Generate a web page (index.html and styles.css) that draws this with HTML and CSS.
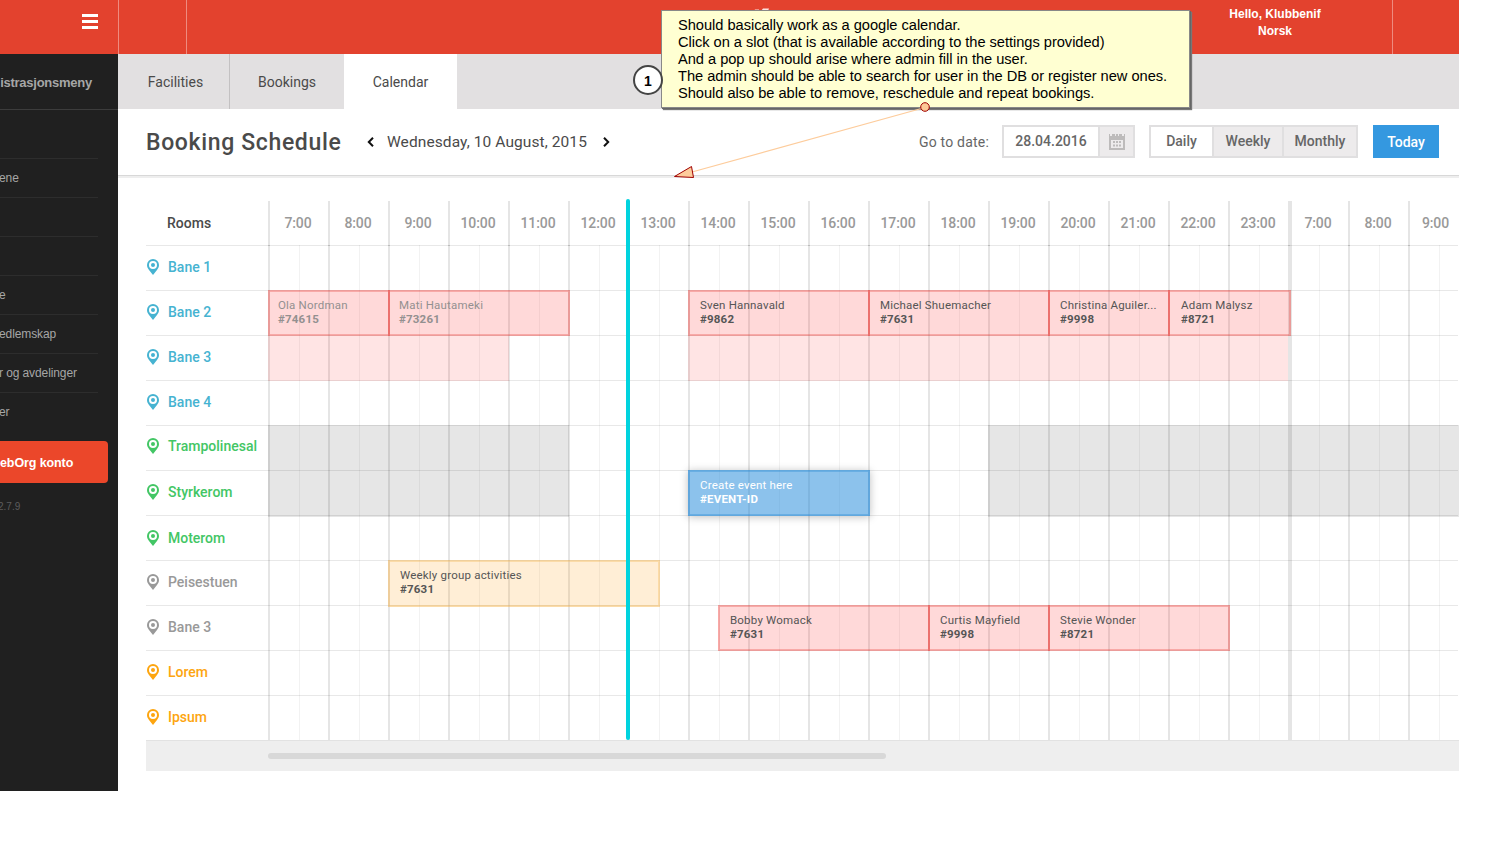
FILE: index.html
```html
<!DOCTYPE html>
<html lang="en">
<head>
  <meta charset="UTF-8" />
  <meta name="viewport" content="width=device-width, initial-scale=1.0"/>
  <title>Booking Schedule</title>
  <link rel="stylesheet" href="styles.css">
</head>
<body>
  <svg width="0" height="0" class="defs">
    <symbol id="pin" viewBox="0 0 12 16">
      <path fill-rule="evenodd" d="M6 0a6 6 0 0 0-6 6c0 2 .9 3.500 2 5l4 5 4-5c1.100-1.500 2-3 2-5a6 6 0 0 0-6-6zm0 2a4 4 0 1 1 0 8 4 4 0 0 1 0-8z"/>
      <circle cx="6" cy="6" r="2"/>
    </symbol>
  </svg>

  <div class="page">
    <header>
      <div class="menu-btn"><span></span><span></span><span></span></div>
      <div class="header-cell"></div>
      <div class="header-logo">
        <svg width="16" height="6" viewBox="0 0 16 6"><path d="M1 1.500h4v1.500H0zM9 0.500h6l-1 2.500H7z" fill="#fff" opacity=".85"/></svg>
      </div>
      <div class="user">Hello, Klubbenif<br>Norsk</div>
      <div class="header-end"></div>
    </header>

    <div class="main">
      <aside>
        <h3>istrasjonsmeny</h3>
        <ul>
          <li></li>
          <li>ene</li>
          <li></li>
          <li></li>
          <li>e</li>
          <li>edlemskap</li>
          <li>r og avdelinger</li>
          <li>er</li>
        </ul>
        <button class="konto">ebOrg konto</button>
        <p class="version">2.7.9</p>
      </aside>

      <div class="content">
        <nav>
          <a class="tab tab-first">Facilities</a>
          <a class="tab">Bookings</a>
          <a class="tab active">Calendar</a>
        </nav>

        <div class="toolbar">
          <h1>Booking Schedule</h1>
          <svg class="arrow" width="7" height="10" viewBox="0 0 7 10"><path d="M6 0.800L1.800 5 6 9.200"/></svg>
          <span class="date">Wednesday, 10 August, 2015</span>
          <svg class="arrow" width="7" height="10" viewBox="0 0 7 10"><path d="M1 0.800L5.200 5 1 9.200"/></svg>
          <span class="goto">Go to date:</span>
          <div class="date-box">
            <span>28.04.2016</span>
            <i>
              <svg width="16" height="16" viewBox="0 0 16 16" fill="#bdbbbb">
                <path d="M0 0h1v2h2V0h3v2h1V0h2v2h1V0h3v2h2V0h1v4H0z"/>
                <path fill-rule="evenodd" d="M0 4h16v12H0zM2 6v8h12V6z"/>
                <path d="M4 7h2v2H4zM7 7h2v2H7zM10 7h2v2h-2zM4 10.500h2v2H4zM7 10.500h2v2H7zM10 10.500h2v2h-2z"/>
              </svg>
            </i>
          </div>
          <div class="views">
            <span class="on">Daily</span>
            <span>Weekly</span>
            <span>Monthly</span>
          </div>
          <button class="today">Today</button>
        </div>

        <div class="schedule">
          <div class="hours">
            <b>Rooms</b>
            <span>7:00</span><span>8:00</span><span>9:00</span><span>10:00</span><span>11:00</span><span>12:00</span>
            <span>13:00</span><span>14:00</span><span>15:00</span><span>16:00</span><span>17:00</span><span>18:00</span>
            <span>19:00</span><span>20:00</span><span>21:00</span><span>22:00</span><span>23:00</span>
            <span class="next-day">7:00</span><span>8:00</span><span class="last">9:00</span>
          </div>

          <div class="rows">
            <div class="row blue">
              <div class="room"><svg><use href="#pin"/></svg>Bane 1</div>
            </div>
            <div class="row blue">
              <div class="room up"><svg><use href="#pin"/></svg>Bane 2</div>
              <div class="event past first" style="grid-column: 2 / span 4">Ola Nordman<b>#74615</b></div>
              <div class="event past" style="grid-column: 6 / span 6">Mati Hautameki<b>#73261</b></div>
              <div class="event" style="grid-column: 16 / span 6">Sven Hannavald<b>#9862</b></div>
              <div class="event" style="grid-column: 22 / span 6">Michael Shuemacher<b>#7631</b></div>
              <div class="event" style="grid-column: 28 / span 4">Christina Aguiler...<b>#9998</b></div>
              <div class="event day-end" style="grid-column: 32 / span 4">Adam Malysz<b>#8721</b></div>
            </div>
            <div class="row blue">
              <div class="room up"><svg><use href="#pin"/></svg>Bane 3</div>
              <div class="busy" style="grid-column: 2 / span 8"></div>
              <div class="busy to-end" style="grid-column: 16 / span 20"></div>
            </div>
            <div class="row blue">
              <div class="room"><svg><use href="#pin"/></svg>Bane 4</div>
            </div>
            <div class="row green">
              <div class="room up"><svg><use href="#pin"/></svg>Trampolinesal</div>
              <div class="closed" style="grid-column: 2 / span 10"></div>
              <div class="closed late" style="grid-column: 26 / span 16"></div>
            </div>
            <div class="row green">
              <div class="room up"><svg><use href="#pin"/></svg>Styrkerom</div>
              <div class="closed bottom" style="grid-column: 2 / span 10"></div>
              <div class="event new" style="grid-column: 16 / span 6">Create event here<b>#EVENT-ID</b></div>
              <div class="closed bottom late" style="grid-column: 26 / span 16"></div>
            </div>
            <div class="row green">
              <div class="room down"><svg><use href="#pin"/></svg>Moterom</div>
            </div>
            <div class="row gray">
              <div class="room up"><svg><use href="#pin"/></svg>Peisestuen</div>
              <div class="event weekly" style="grid-column: 6 / span 9">Weekly group activities<b>#7631</b></div>
            </div>
            <div class="row gray">
              <div class="room up"><svg><use href="#pin"/></svg>Bane 3</div>
              <div class="event" style="grid-column: 17 / span 7">Bobby Womack<b>#7631</b></div>
              <div class="event" style="grid-column: 24 / span 4">Curtis Mayfield<b>#9998</b></div>
              <div class="event" style="grid-column: 28 / span 6">Stevie Wonder<b>#8721</b></div>
            </div>
            <div class="row orange">
              <div class="room"><svg><use href="#pin"/></svg>Lorem</div>
            </div>
            <div class="row orange">
              <div class="room"><svg><use href="#pin"/></svg>Ipsum</div>
            </div>
          </div>
          <div class="now"></div>
          <div class="scroll"><div class="thumb"></div></div>
        </div>
      </div>
    </div>
  </div>

  <!-- Review note -->
  <div class="note">
    <p>Should basically work as a google calendar.</p>
    <p>Click on a slot (that is available according to the settings provided)</p>
    <p>And a pop up should arise where admin fill in the user.</p>
    <p>The admin should be able to search for user in the DB or register new ones.</p>
    <p>Should also be able to remove, reschedule and repeat bookings.</p>
  </div>
  <div class="note-number">1</div>
  <svg class="note-arrow" width="260" height="80" viewBox="0 0 260 80">
    <path d="M253 7.500L20 72" stroke="#fdcc9c" stroke-width="1.200" fill="none"/>
    <path d="M2.500 76.500L19.500 66.500 21.500 77.500z" fill="#fdcc9c" stroke="#a00000"/>
    <circle cx="253" cy="7" r="4.300" fill="#fdc896" stroke="#a00000"/>
  </svg>
</body>
</html>
```
FILE: styles.css
```css
* {
  box-sizing: border-box;
}
body {
  margin: 0;
  background: #fff;
  color: #4a4a4a;
  font-family: Roboto, sans-serif;
  font-size: 14px;
  overflow: hidden;
}
.defs {
  position: absolute;
}
.page {
  width: 1459px;
}
header {
  display: flex;
  height: 54px;
  background: #e3422e;
  color: #fff;
}
.menu-btn {
  width: 118px;
  padding: 14px 20px 0 82px;
  display: flex;
  flex-direction: column;
  gap: 3px;
}
.menu-btn span {
  height: 3px;
  background: #fff;
}
.header-cell {
  width: 69px;
  border-left: 1px solid #ee8b7f;
  border-right: 1px solid #ee8b7f;
}
.header-logo {
  flex: 1;
  padding: 8px 0 0 567px;
}
.header-logo svg {
  display: block;
}
.user {
  width: 234px;
  padding-top: 6px;
  text-align: center;
  font: bold 12px/17px "Liberation Sans", sans-serif;
}
.header-end {
  width: 67px;
  border-left: 1px solid #ee8b7f;
}
.main {
  display: flex;
}

/* Sidebar */
aside {
  width: 118px;
  height: 737px;
  background: #202020;
  color: #a6a6a6;
  font: 12px "Liberation Sans", sans-serif;
  overflow: hidden;
  white-space: nowrap;
}
aside h3 {
  height: 56px;
  margin: 0 0 10px;
  padding-right: 26px;
  border-bottom: 1px solid #3c3c3c;
  font-size: 13px;
  line-height: 57px;
  text-align: right;
  letter-spacing: -0.25px;
}
aside ul {
  list-style: none;
  margin: 0 20px 0 0;
  padding: 0;
}
aside li {
  height: 39px;
  line-height: 38px;
  border-bottom: 1px solid #2d2d2d;
  text-indent: -1px;
  letter-spacing: -0.1px;
}
aside li:last-child {
  border: none;
}
.konto {
  display: block;
  width: 112px;
  height: 42px;
  margin: 9px 0 0 -4px;
  padding: 1px 0 0 4px;
  border: none;
  border-radius: 4px;
  background: #eb472a;
  color: #fff;
  font: bold 12.500px "Liberation Sans", sans-serif;
  letter-spacing: -0.1px;
  text-align: left;
}
.version {
  margin: 18px 0 0 -2px;
  color: #5c5c5c;
  font-size: 10px;
}

/* Tabs and toolbar */
.content {
  flex: 1;
}
nav {
  display: flex;
  height: 55px;
  background: #e2e0e1;
}
.tab {
  width: 114px;
  text-align: center;
  line-height: 57px;
}
.tab-first {
  width: 112px;
  padding-left: 4px;
  border-right: 1px solid #c3c1c2;
}
.active {
  width: 113px;
  background: #fff;
}
.toolbar {
  display: flex;
  align-items: center;
  height: 67px;
  padding: 0 20px 1px 28px;
  border-bottom: 1px solid #d8d8d8;
  box-shadow: 0 1px 0 #eee, 0 2px 0 #eee;
}
h1 {
  width: 221px;
  margin: 0;
  padding-top: 1px;
  font-size: 23px;
  font-weight: 500;
  letter-spacing: 0.65px;
  white-space: nowrap;
}
.arrow {
  fill: none;
  stroke: #111;
  stroke-width: 2;
}
.date {
  width: 229px;
  padding-left: 13px;
  font-size: 15.500px;
  letter-spacing: 0.09px;
  white-space: nowrap;
}
.goto {
  margin-left: auto;
  margin-right: 13px;
  color: #666;
  letter-spacing: 0.2px;
}
.date-box,
.views {
  display: flex;
  height: 33px;
  border: 2px solid #e0dfe0;
  font-weight: 500;
  color: #666;
  line-height: 29px;
}
.date-box {
  width: 133px;
  margin-right: 14px;
}
.date-box span {
  width: 94px;
  text-align: center;
}
.date-box i {
  flex: 1;
  display: flex;
  align-items: center;
  justify-content: center;
  border-left: 2px solid #e0dfe0;
  background: #edebec;
}
.views {
  width: 209px;
  margin-right: 15px;
}
.views span {
  width: 70px;
  border-left: 2px solid #e0dfe0;
  background: #edebec;
  text-align: center;
}
.views span:last-child {
  flex: 1;
}
.views .on {
  width: 61px;
  border: none;
  background: #fff;
}
.today {
  width: 66px;
  height: 33px;
  padding: 0;
  border: none;
  background: #3498e0;
  color: #fff;
  font: 500 14px Roboto, sans-serif;
}

/* Schedule */
.schedule {
  position: relative;
  margin: 25px 0 0 28px;
}
.hours {
  display: grid;
  grid-template-columns: 122px repeat(19, 60px) 50px;
  width: 1312px;
  height: 44px;
  line-height: 45px;
  color: #999;
  font-weight: 500;
}
.hours span {
  padding-right: 2px;
  border-left: 2px solid #e5e5e5;
  text-align: center;
  letter-spacing: -0.1px;
}
.hours .next-day {
  padding-right: 4px;
  border-left-width: 4px;
}
.hours .last {
  padding: 0 0 0 3px;
}
.hours b {
  padding-left: 21px;
  color: #4a4a4a;
  font-weight: 500;
}
.rows {
  position: relative;
  width: 1312px;
  background:
    linear-gradient(#e5e5e5, #e5e5e5) 1144px 0 / 2px 100% no-repeat,
    repeating-linear-gradient(to right, rgba(0,0,0,0.1) 0 2px, transparent 2px 31px, rgba(0,0,0,0.05) 31px 32px, transparent 32px 60px) 122px 0 no-repeat;
}
.row {
  display: grid;
  grid-template-columns: 122px repeat(40, 30px);
  height: 45px;
  border-top: 1px solid rgba(0,0,0,0.09);
}
.room {
  display: flex;
  align-items: center;
  gap: 9px;
  padding: 0 0 2px 1px;
  grid-row: 1;
  font-weight: 500;
}
.room svg {
  width: 12px;
  height: 16px;
  fill: currentColor;
}
.up {
  padding-bottom: 4px;
}
.down {
  padding-bottom: 0;
}
.blue {
  color: #46b3d1;
}
.green {
  color: #43c665;
}
.gray {
  color: #999;
}
.orange {
  color: #fda50f;
}
.event {
  grid-row: 1;
  height: 46px;
  margin: -1px -2px 0 0;
  padding: 6px 0 0 10px;
  border: 2px solid rgba(235,80,75,0.35);
  background: rgba(255,0,0,0.15);
  color: #555;
  font-size: 11.500px;
  line-height: 14px;
  letter-spacing: 0.2px;
  white-space: nowrap;
}
.event b {
  display: block;
}
.past {
  padding-left: 9px;
  color: #939090;
}
.first {
  padding-left: 8px;
}
.day-end {
  margin-right: -3px;
  padding-left: 11px;
}
.busy {
  grid-row: 1;
  height: 45px;
  margin-right: -1px;
  background: rgba(255,0,0,0.105);
}
.to-end {
  margin-right: 0;
}
.closed {
  grid-row: 1;
  height: 45px;
  margin: -1px -1px 0 0;
  background: rgba(0,0,0,0.097);
}
.late {
  margin-right: 9px;
}
.bottom {
  height: 47px;
}
.new {
  border-color: rgba(52,145,215,0.4);
  background: rgba(25,133,218,0.5);
  box-shadow: 0 1px 8px rgba(0,0,0,0.25);
  color: #fff;
}
.weekly {
  height: 47px;
  border-color: rgba(245,190,100,0.4);
  background: rgba(255,150,0,0.16);
}
.now {
  position: absolute;
  top: -2px;
  left: 480px;
  width: 4px;
  height: 541px;
  border-radius: 2px;
  background: #00d3de;
}
.scroll {
  height: 31px;
  padding: 12px 0 0 122px;
  border-top: 1px solid #e2e2e2;
  background: #eee;
}
.thumb {
  width: 618px;
  height: 6px;
  border-radius: 3px;
  background: #d8d8d8;
}

/* Note */
.note {
  position: absolute;
  top: 10px;
  left: 661px;
  width: 529px;
  height: 98px;
  padding: 6px 0 0 16px;
  border: 1px solid #888;
  background: #ffffd2;
  box-shadow: 1px 1px 0 #666, 2px 2px 1px #777;
  color: #000;
  font: 14.670px/17px "Liberation Sans", sans-serif;
  letter-spacing: -0.04px;
  white-space: nowrap;
}
.note p {
  margin: 0;
}
.note-number {
  position: absolute;
  top: 65px;
  left: 633px;
  width: 30px;
  height: 30px;
  border: 2px solid #444;
  border-radius: 50%;
  background: #fff;
  color: #000;
  font: bold 14px/28px "Liberation Sans", sans-serif;
  text-align: center;
}
.note-arrow {
  position: absolute;
  top: 100px;
  left: 672px;
}
```
